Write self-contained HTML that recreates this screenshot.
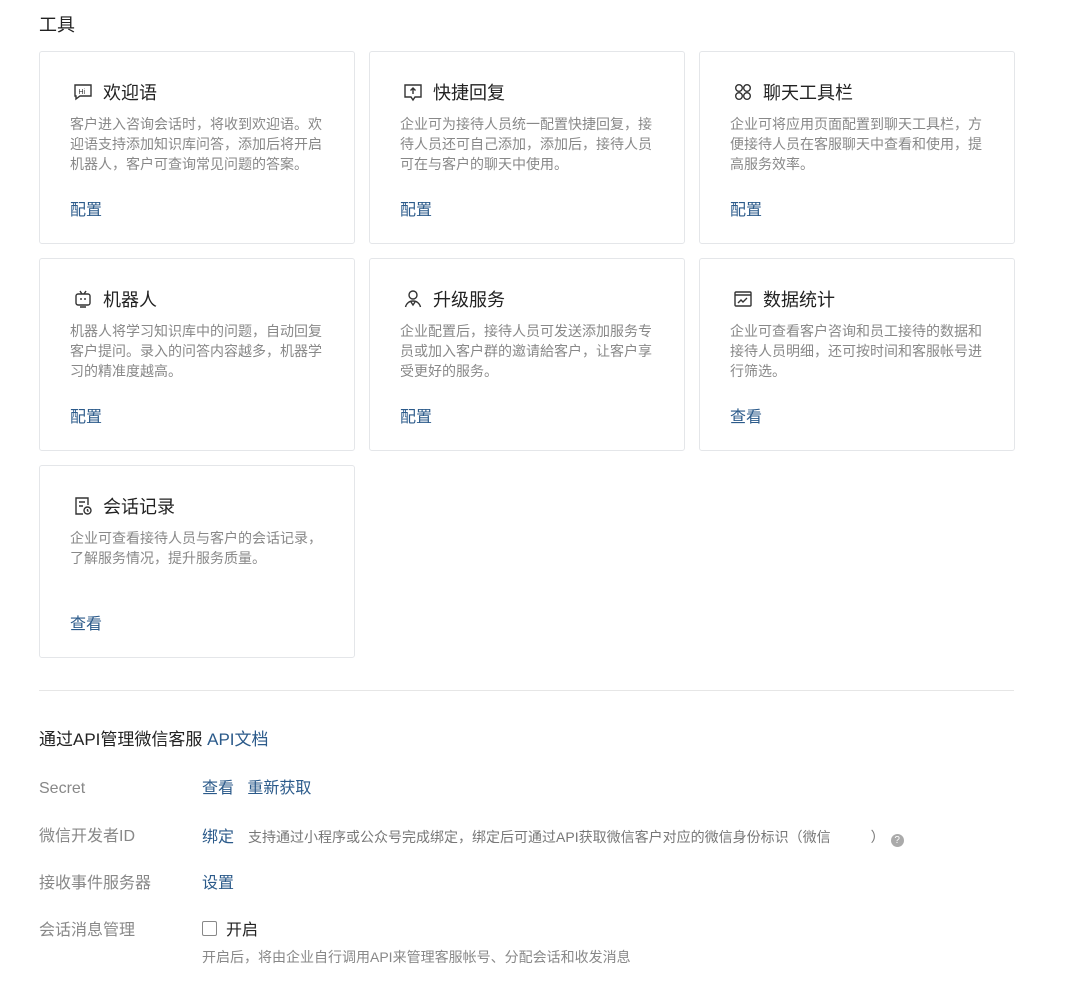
<!DOCTYPE html>
<html><head><meta charset="utf-8"><style>
body{margin:0;background:#fff;font-family:"Liberation Sans","Noto Sans CJK SC",sans-serif;width:1080px;height:987px;position:relative;overflow:hidden;color:#222}
.h{position:absolute;left:39px;top:11px;font-size:18px;color:#222}
.card{position:absolute;width:316px;height:193px;border:1px solid #e4e6e9;border-radius:3px;box-sizing:border-box}
.t{position:absolute;left:33px;top:27px;font-size:18px;color:#222;display:flex;align-items:center}
.t svg{width:20px;height:20px;margin-right:10px}
.d{position:absolute;left:30px;top:62px;width:256px;font-size:14px;line-height:20px;color:#888}
.l{position:absolute;left:30px;top:149px;font-size:16px;line-height:20px;color:#2b5a8a}
.hr{position:absolute;left:39px;top:690px;width:975px;border-top:1px solid #e6e6e6}
.r{position:absolute;font-size:16px;line-height:20px}
.lab{left:39px;color:#888}
.a{color:#2b5a8a}
</style></head><body>
<div class="h">工具</div>

<div class="card" style="left:39px;top:51px"><div class="t"><svg viewBox="0 0 20 20" fill="none" stroke="#333" stroke-width="1.4"><path d="M2 3h16v11H7l-4 3v-3H2z"/><text x="5.5" y="12" font-size="7" fill="#333" stroke="none" font-family="Liberation Sans">Hi</text></svg>欢迎语</div><div class="d">客户进入咨询会话时，将收到欢迎语。欢迎语支持添加知识库问答，添加后将开启机器人，客户可查询常见问题的答案。</div><div class="l">配置</div></div>
<div class="card" style="left:369px;top:51px"><div class="t"><svg viewBox="0 0 20 20" fill="none" stroke="#333" stroke-width="1.4"><path d="M2 3h16v12h-6l-2 3-2-3H2z"/><path d="M10 12V6M7.5 8.5 10 6l2.5 2.5"/></svg>快捷回复</div><div class="d">企业可为接待人员统一配置快捷回复，接待人员还可自己添加，添加后，接待人员可在与客户的聊天中使用。</div><div class="l">配置</div></div>
<div class="card" style="left:699px;top:51px"><div class="t"><svg viewBox="0 0 20 20" fill="none" stroke="#333" stroke-width="1.4"><circle cx="6" cy="6" r="3.3"/><circle cx="14" cy="6" r="3.3"/><circle cx="6" cy="14" r="3.3"/><circle cx="14" cy="14" r="3.3"/></svg>聊天工具栏</div><div class="d">企业可将应用页面配置到聊天工具栏，方便接待人员在客服聊天中查看和使用，提高服务效率。</div><div class="l">配置</div></div>

<div class="card" style="left:39px;top:258px"><div class="t"><svg viewBox="0 0 20 20" fill="none" stroke="#333" stroke-width="1.4"><rect x="3" y="5" width="14" height="11" rx="2"/><path d="M7 2l2 3M13 2l-2 3M8 9v2M12 9v2M7 18h6"/></svg>机器人</div><div class="d">机器人将学习知识库中的问题，自动回复客户提问。录入的问答内容越多，机器学习的精准度越高。</div><div class="l">配置</div></div>
<div class="card" style="left:369px;top:258px"><div class="t"><svg viewBox="0 0 20 20" fill="none" stroke="#333" stroke-width="1.4"><circle cx="10" cy="6" r="4"/><path d="M2.5 18c1-4 4-6 7.5-6s6.5 2 7.5 6M8 13l2 3 2-3"/></svg>升级服务</div><div class="d">企业配置后，接待人员可发送添加服务专员或加入客户群的邀请給客户，让客户享受更好的服务。</div><div class="l">配置</div></div>
<div class="card" style="left:699px;top:258px"><div class="t"><svg viewBox="0 0 20 20" fill="none" stroke="#333" stroke-width="1.4"><rect x="2" y="3" width="16" height="14" rx="1"/><path d="M2 6h16M5 14l3-3 2 2 4-4"/></svg>数据统计</div><div class="d">企业可查看客户咨询和员工接待的数据和接待人员明细，还可按时间和客服帐号进行筛选。</div><div class="l">查看</div></div>

<div class="card" style="left:39px;top:465px"><div class="t"><svg viewBox="0 0 20 20" fill="none" stroke="#333" stroke-width="1.4"><path d="M10 18H3V2h12v7"/><path d="M6 6h6M6 10h4"/><circle cx="14.5" cy="14.5" r="3.5"/><path d="M14.5 13v1.7l1 .8"/></svg>会话记录</div><div class="d">企业可查看接待人员与客户的会话记录，了解服务情况，提升服务质量。</div><div class="l">查看</div></div>

<div class="hr"></div>
<div class="r" style="left:39px;top:730px;font-size:17px;color:#222">通过API管理微信客服 <span class="a">API文档</span></div>
<div class="r lab" style="top:779px">Secret</div>
<div class="r a" style="left:202px;top:779px">查看&nbsp;&nbsp;&nbsp;重新获取</div>
<div class="r lab" style="top:827px">微信开发者ID</div>
<div class="r" style="left:202px;top:827px"><span class="a">绑定</span><span style="font-size:14px;color:#777;margin-left:14px">支持通过小程序或公众号完成绑定，绑定后可通过API获取微信客户对应的微信身份标识（微信<span style="display:inline-block;width:40px"></span>）</span><span style="display:inline-block;width:13px;height:13px;border-radius:50%;background:#aaa;color:#fff;font-size:10px;text-align:center;line-height:13px;margin-left:6px;vertical-align:-1px">?</span></div>
<div class="r lab" style="top:874px">接收事件服务器</div>
<div class="r a" style="left:202px;top:874px">设置</div>
<div class="r lab" style="top:921px">会话消息管理</div>
<div class="r" style="left:202px;top:921px;color:#222"><span style="display:inline-block;width:13px;height:13px;border:1px solid #888;border-radius:2px;vertical-align:-1px;margin-right:9px"></span>开启</div>
<div class="r" style="left:202px;top:947px;font-size:14px;color:#888">开启后，将由企业自行调用API来管理客服帐号、分配会话和收发消息</div>
</body></html>
